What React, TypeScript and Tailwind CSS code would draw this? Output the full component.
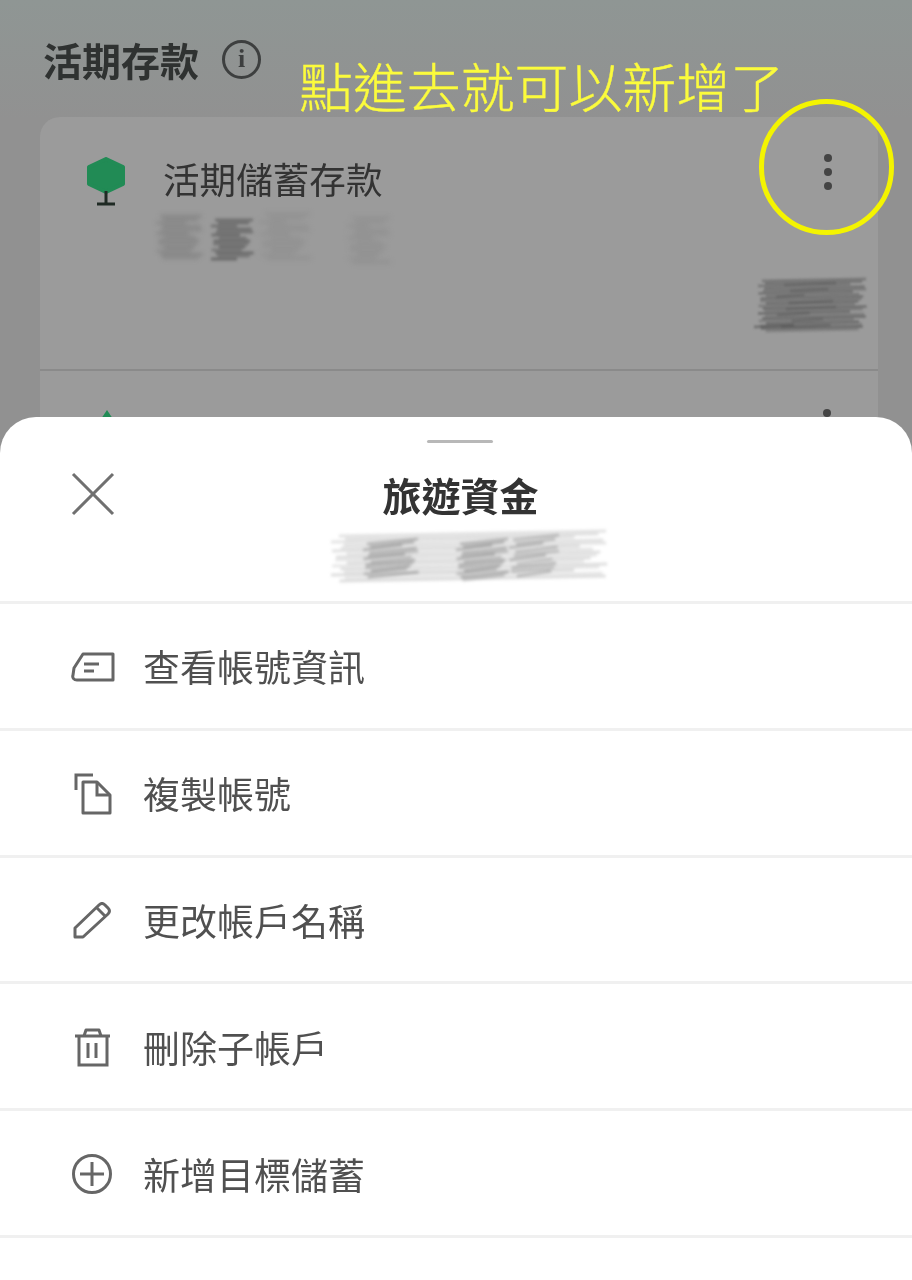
import type { ReactNode } from 'react';

const CJK = "font-['Noto_Sans_CJK_TC','Noto_Sans_CJK_SC',sans-serif]";

// redaction strokes, each one is [x, y, length, opacity]
type Stroke = number[];

const rows = (x: number, w: number, top: number, bottom: number, step: number, op: number, jitter = 4): Stroke[] => {
  const out: Stroke[] = [];
  let i = 0;
  for (let y = top; y <= bottom; y += step) {
    const dx = Math.sin(i * 2.3) * jitter;
    const dw = Math.cos(i * 1.7) * jitter * 1.5;
    out.push([x + dx, y, w + dw, op * (0.75 + 0.25 * Math.sin(i * 3.1))]);
    i++;
  }
  return out;
};

const Scribble = ({
  width,
  height,
  color,
  blur,
  strokes,
  tilt = 0,
}: {
  width: number;
  height: number;
  color: string;
  blur: number;
  strokes: Stroke[];
  tilt?: number;
}) => (
  <svg width={width} height={height} viewBox={`0 0 ${width} ${height}`} className="block overflow-visible">
    <g style={{ filter: `blur(${blur}px)` }}>
      {strokes.map(([x, y, len, op], i) => (
        <line key={i} x1={x} y1={y} x2={x + len} y2={y - tilt} stroke={color} strokeOpacity={op} strokeWidth={3} />
      ))}
    </g>
  </svg>
);

const Tree = () => (
  <svg width="40" height="50" viewBox="0 0 40 50" className="shrink-0 mt-[2px]">
    <path d="M20 2 L37 10 V27 L20 35 L3 27 V10 Z" fill="#218b55" stroke="#218b55" strokeWidth="4" strokeLinejoin="round" />
    <path d="M20 34 V46 M11 47 H29" stroke="#1f2a24" strokeWidth="3" fill="none" />
  </svg>
);

const Dots = () => (
  <div className="flex flex-col gap-[6px]">
    <span className="w-[8px] h-[8px] rounded-full bg-[#444]" />
    <span className="w-[8px] h-[8px] rounded-full bg-[#444]" />
    <span className="w-[8px] h-[8px] rounded-full bg-[#444]" />
  </div>
);

const IdIcon = () => (
  <svg width="44" height="30" viewBox="0 0 44 30" fill="none" stroke="#666" strokeWidth="3" strokeLinejoin="round">
    <path d="M12 2 H42 V28 H6 C3 28 1 26 2 23 L3 16 Z" />
    <path d="M13 12 H28 M13 19 H23" />
  </svg>
);

const CopyIcon = () => (
  <svg width="40" height="42" viewBox="0 0 40 42" fill="none" stroke="#666" strokeWidth="3" className="ml-[3px]">
    <path d="M2 17 V2 H19" />
    <path d="M9 9 H23 L36 22 V40 H9 Z" strokeLinejoin="round" />
    <path d="M23 9 V22 H36" />
  </svg>
);

const PencilIcon = () => (
  <svg width="40" height="38" viewBox="0 0 40 38" fill="none" stroke="#666" strokeWidth="3" strokeLinejoin="round" className="ml-[1px]">
    <path d="M3 27 L27 4 C29 2 31 2 33 4 L36 7 C38 9 38 11 36 13 L11 36 L3 36 Z" />
    <path d="M25 7 L33 15" />
  </svg>
);

const TrashIcon = () => (
  <svg width="40" height="40" viewBox="0 0 40 40" fill="none" stroke="#666" strokeWidth="3" className="ml-[2px]">
    <path d="M2 9 H37" />
    <path d="M11 9 L13 3 H26 L28 9" strokeLinejoin="round" />
    <path d="M6 9 V38 H34 V9" />
    <path d="M15 16 V31 M23 16 V31" />
  </svg>
);

const PlusIcon = () => (
  <svg width="42" height="42" viewBox="0 0 42 42" fill="none" stroke="#666" strokeWidth="3">
    <circle cx="21" cy="21" r="18.5" />
    <path d="M9 21 H33 M21 9 V33" />
  </svg>
);

const CloseIcon = () => (
  <svg width="44" height="44" viewBox="0 0 44 44" fill="none" stroke="#707070" strokeWidth="3" className="shrink-0">
    <path d="M2 2 L42 42 M42 2 L2 42" />
  </svg>
);

const MenuRow = ({ icon, label }: { icon: ReactNode; label: string }) => (
  <div className="h-[126.8px] flex items-center border-b-[3px] border-[#f0f0f0] pl-[71px] pt-[2px]">
    <div className="w-[72px] shrink-0 flex items-center blur-[0.3px]">{icon}</div>
    <span className="text-[37px] leading-none text-[#505050] blur-[0.4px]">{label}</span>
  </div>
);

export default function App() {
  return (
    <div className={`relative w-[912px] h-[1280px] overflow-hidden bg-white ${CJK}`}>
      <div className="h-[480px] overflow-hidden bg-[#909090] bg-gradient-to-b from-[#8f9694] to-[#919191] to-[25%] px-10 pt-[36px]">
        <div className="flex items-center h-[46px] blur-[0.5px]">
          <span className="text-[39px] leading-none font-bold text-[#2f3231] ml-[3px]">活期存款</span>
          <div className="ml-[23px] w-[39px] h-[39px] rounded-full border-[3px] border-[#3d3f3f] flex items-center justify-center text-[#3d3f3f] font-['Liberation_Serif',serif] font-bold text-[26px] leading-none">
            i
          </div>
        </div>
        <div className="mt-[35px] w-[838px] rounded-t-[20px] bg-[#9b9b9b]">
          <div className="h-[254px] border-b-2 border-[#8a8a8a] flex flex-col pl-[46px] pr-[14px] pt-[38px]">
            <div className="flex items-start">
              <Tree />
              <div className="ml-[37px] flex-1">
                <div className="text-[36.6px] leading-[50px] text-[#333] blur-[0.6px] mt-[-1px]">活期儲蓄存款</div>
                <div className="mt-[10px] ml-[-3px] flex">
                  <div className="w-[55px]">
                    <Scribble width={42} height={48} color="#777" blur={2} strokes={rows(0, 36, 2, 46, 3.5, 0.7)} />
                  </div>
                  <div className="w-[50px]">
                    <Scribble width={38} height={48} color="#5a5a5a" blur={1.8} strokes={rows(0, 32, 6, 46, 3, 0.85)} />
                  </div>
                  <div className="w-[85px]">
                    <Scribble width={44} height={48} color="#858585" blur={2.6} strokes={rows(0, 36, 0, 46, 4, 0.6, 6)} />
                  </div>
                  <Scribble width={40} height={48} color="#858585" blur={2.4} strokes={rows(2, 30, 4, 48, 4, 0.6, 5)} />
                </div>
              </div>
              <div className="mt-[-1px] mr-[32px]">
                <Dots />
              </div>
            </div>
            <div className="flex justify-end mt-auto mb-[30px] mr-[-2px]">
              <Scribble
                width={110}
                height={64}
                color="#4f4f4f"
                blur={1.2}
                tilt={2}
                strokes={[...rows(6, 98, 6, 58, 2.5, 0.55, 4), ...rows(28, 40, 10, 56, 6, 0.45, 8), [-2, 52, 40, 0.5]]}
              />
            </div>
          </div>
          <div className="h-[120px] pl-[46px] pr-[46px] pt-[38px] flex justify-between">
            <svg width="42" height="10" viewBox="0 0 42 10">
              <path d="M21 1 L27 10 H15 Z" fill="#218b55" />
            </svg>
            <span className="w-[8px] h-[8px] rounded-full bg-[#444] mr-[1px]" />
          </div>
        </div>
      </div>

      <div className="absolute left-0 top-[417px] w-full h-[863px] bg-white rounded-t-[36px]">
        <div className="h-[187px] border-b-[3px] border-[#f0f0f0] flex flex-col items-center pt-[23px]">
          <div className="w-[66px] h-[3px] rounded-full bg-[#b8b8b8] ml-[8px]" />
          <div className="w-full h-[60px] mt-[21px] relative flex items-center justify-center">
            <div className="absolute left-[71px] top-[8px]">
              <CloseIcon />
            </div>
            <span className="text-[39px] leading-none font-bold text-[#333] ml-[9px] blur-[0.4px]">旅遊資金</span>
          </div>
          <div className="mt-[6px] ml-[28px]">
            <Scribble
              width={270}
              height={54}
              color="#707070"
              blur={1.7}
              tilt={5}
              strokes={[
                ...rows(4, 255, 6, 52, 3, 0.26, 8),
                ...rows(32, 45, 14, 48, 3, 0.5, 4),
                ...rows(125, 42, 14, 50, 3, 0.5, 4),
                ...rows(178, 40, 10, 46, 4, 0.45, 4),
              ]}
            />
          </div>
        </div>
        <MenuRow icon={<IdIcon />} label="查看帳號資訊" />
        <MenuRow icon={<CopyIcon />} label="複製帳號" />
        <MenuRow icon={<PencilIcon />} label="更改帳戶名稱" />
        <MenuRow icon={<TrashIcon />} label="刪除子帳戶" />
        <MenuRow icon={<PlusIcon />} label="新增目標儲蓄" />
      </div>

      {/* annotation drawn on top of the screenshot */}
      <div className="absolute left-[299px] top-[54px] text-[53.9px] leading-[62px] font-light text-[#fbfb3c] whitespace-nowrap [-webkit-text-stroke:0.4px_#fbfb3c]">
        點進去就可以新增了
      </div>
      <div className="absolute left-[759px] top-[99px] w-[135px] h-[136px] rounded-full border-[5px] border-[#f4f400]" />
    </div>
  );
}
